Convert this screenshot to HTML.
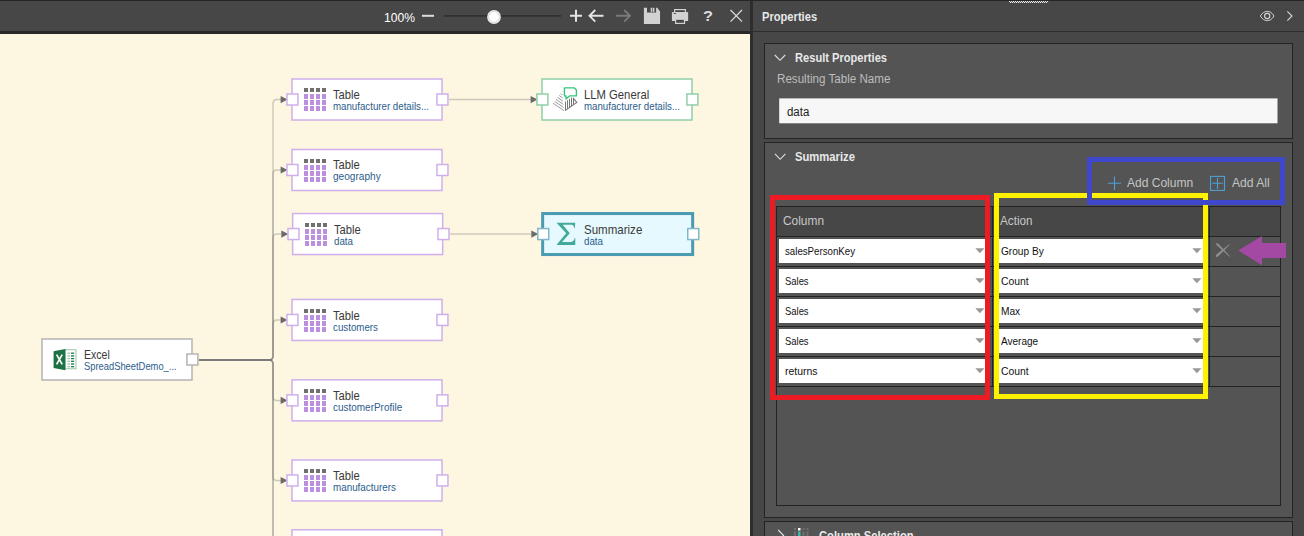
<!DOCTYPE html>
<html><head><meta charset="utf-8"><title>Properties</title>
<style>
*{box-sizing:border-box;margin:0;padding:0}
html,body{width:1304px;height:536px;overflow:hidden;background:#474747;font-family:"Liberation Sans",sans-serif}
.a{position:absolute}
.x{position:absolute;white-space:nowrap;transform-origin:0 0}
</style></head><body>
<div class="a" style="left:0;top:0;width:1304px;height:1px;background:#262626"></div>
<div class="a" style="left:0;top:31px;width:753px;height:3px;background:#282828"></div>
<div class="a" style="left:750px;top:1px;width:3px;height:535px;background:#2d2d2d"></div>
<div class="a" style="left:753px;top:31px;width:551px;height:1px;background:#2d2d2d"></div>
<div class="a" id="canvas" style="left:0;top:34px;width:750px;height:502px;background:#fdf6e0"></div>
<svg class="a" style="left:360px;top:0" width="400" height="34" viewBox="360 0 400 34">
<rect x="422" y="14.8" width="12" height="2" fill="#dcdcdc"/>
<rect x="444" y="15.1" width="117" height="1.6" fill="#2e2e2e"/>
<circle cx="494" cy="17" r="7.400" fill="#3c3c3c" fill-opacity="0.5"/><circle cx="494" cy="17" r="6.900" fill="#ececec"/><circle cx="494" cy="17" r="5.700" fill="#d6d6d6"/><circle cx="494" cy="17" r="4.900" fill="#fff"/>
<path d="M570 15.8h12M576 9.8v12" stroke="#e4e4e4" stroke-width="2" fill="none"/>
<path d="M589.5 15.8h14M595.3 10l-5.8 5.8 5.8 5.8" stroke="#e4e4e4" stroke-width="1.9" fill="none"/>
<path d="M616 15.8h14M624.2 10l5.8 5.8-5.8 5.8" stroke="#7a7a7a" stroke-width="1.9" fill="none"/>
<path d="M643.900 7.800H647V12.600H656.100V7.800H657.300L660.050 11.400V24H643.900Z" fill="#d2d2d2"/>
<path d="M650.700 7.800H654.400V11.800H650.700Z" fill="#d2d2d2"/><rect x="652.200" y="7.800" width="0.800" height="4" fill="#474747" fill-opacity="0.8"/>
<rect x="674.600" y="9.600" width="10.800" height="3" fill="#474747" stroke="#d2d2d2" stroke-width="1.200"/>
<rect x="671.900" y="12.100" width="16.250" height="8.900" fill="#d2d2d2"/>
<rect x="673.800" y="13" width="2" height="0.900" fill="#3a3a3a"/>
<rect x="675.600" y="19.200" width="8.900" height="4.200" fill="#474747" stroke="#d2d2d2" stroke-width="1.200"/>
<path d="M730.5 10l11.5 11.6M742 10l-11.5 11.6" stroke="#dcdcdc" stroke-width="1.2" fill="none"/>
</svg>
<div class="a" style="left:1009px;top:1px;width:40px;height:1px;background:repeating-linear-gradient(90deg,#f0f0f0 0 1px,#5a5a5a 1px 2px)"></div>
<div class="a" style="left:1010px;top:2px;width:37px;height:1px;background:repeating-linear-gradient(90deg,#f0f0f0 0 1px,#5a5a5a 1px 2px)"></div>
<svg class="a" style="left:1255px;top:5px" width="45" height="22" viewBox="1255 5 45 22">
<path d="M1260.4 16c2-3.4 4.2-4.6 6.8-4.6s4.8 1.2 6.8 4.6c-2 3.4-4.2 4.6-6.8 4.6s-4.800-1.200-6.800-4.600z" fill="none" stroke="#d4d4d4" stroke-width="1"/>
<circle cx="1267.2" cy="16" r="2.6" fill="none" stroke="#d8d8d8" stroke-width="1.1"/>
<path d="M1287.300 11.300l4.700 4.700-4.700 4.700" fill="none" stroke="#d8d8d8" stroke-width="1.1"/>
</svg>
<div class="a" style="left:764px;top:43px;width:529px;height:96px;background:#545454;border:1px solid #232323"></div>
<svg class="a" style="left:772px;top:50px" width="16" height="14"><path d="M2.800 5l5.200 5.300 5.200-5.300" fill="none" stroke="#e0e0e0" stroke-width="1.1"/></svg>
<svg class="a" style="left:778px;top:97px" width="502" height="28" viewBox="778 97 502 28"><rect x="779.200" y="98.400" width="498.300" height="24.900" fill="#f7f7f7"/></svg>
<div class="a" style="left:764px;top:142px;width:529px;height:375.500px;background:#545454;border:1px solid #232323"></div>
<svg class="a" style="left:772px;top:149px" width="16" height="14"><path d="M3 4.900l5.200 5.400 5.200-5.400" fill="none" stroke="#e0e0e0" stroke-width="1.1"/></svg>
<svg class="a" style="left:1100px;top:170px" width="135" height="28" viewBox="1100 170 135 28">
<path d="M1108 183.300h13M1114.500 176.600v13.400" stroke="#4d9fd6" stroke-width="1.100" fill="none"/>
<rect x="1210.500" y="176.400" width="14" height="14" fill="none" stroke="#4d9fd6" stroke-width="1.100"/>
<path d="M1212 183.300h11M1217.500 178v11" stroke="#4d9fd6" stroke-width="1.100" fill="none"/>
</svg>
<div class="a" style="left:776px;top:206px;width:505px;height:300px;border:1px solid #232323"></div>
<div class="a" style="left:777px;top:207px;width:503px;height:29px;background:#474747"></div>
<div class="a" style="left:777px;top:236px;width:503px;height:1px;background:#232323"></div>
<div class="a" style="left:992px;top:207px;width:1px;height:180px;background:#232323"></div>
<div class="a" style="left:1209px;top:207px;width:1px;height:180px;background:#232323"></div>
<div class="a" style="left:779px;top:239px;width:210px;height:24px;background:#fff"></div>
<div class="a" style="left:996px;top:239px;width:210px;height:24px;background:#fff"></div>
<div class="a" style="left:777px;top:266px;width:503px;height:1px;background:#232323"></div>
<svg class="a" style="left:975px;top:248px" width="11" height="6"><path d="M0.300 0.200h9.200l-4.600 5z" fill="#999"/></svg>
<svg class="a" style="left:1192px;top:248px" width="11" height="6"><path d="M0.300 0.200h9.200l-4.600 5z" fill="#999"/></svg>
<div class="a" style="left:779px;top:269px;width:210px;height:24px;background:#fff"></div>
<div class="a" style="left:996px;top:269px;width:210px;height:24px;background:#fff"></div>
<div class="a" style="left:777px;top:296px;width:503px;height:1px;background:#232323"></div>
<svg class="a" style="left:975px;top:278px" width="11" height="6"><path d="M0.300 0.200h9.200l-4.600 5z" fill="#999"/></svg>
<svg class="a" style="left:1192px;top:278px" width="11" height="6"><path d="M0.300 0.200h9.200l-4.600 5z" fill="#999"/></svg>
<div class="a" style="left:779px;top:299px;width:210px;height:24px;background:#fff"></div>
<div class="a" style="left:996px;top:299px;width:210px;height:24px;background:#fff"></div>
<div class="a" style="left:777px;top:326px;width:503px;height:1px;background:#232323"></div>
<svg class="a" style="left:975px;top:308px" width="11" height="6"><path d="M0.300 0.200h9.200l-4.600 5z" fill="#999"/></svg>
<svg class="a" style="left:1192px;top:308px" width="11" height="6"><path d="M0.300 0.200h9.200l-4.600 5z" fill="#999"/></svg>
<div class="a" style="left:779px;top:329px;width:210px;height:24px;background:#fff"></div>
<div class="a" style="left:996px;top:329px;width:210px;height:24px;background:#fff"></div>
<div class="a" style="left:777px;top:356px;width:503px;height:1px;background:#232323"></div>
<svg class="a" style="left:975px;top:338px" width="11" height="6"><path d="M0.300 0.200h9.200l-4.600 5z" fill="#999"/></svg>
<svg class="a" style="left:1192px;top:338px" width="11" height="6"><path d="M0.300 0.200h9.200l-4.600 5z" fill="#999"/></svg>
<div class="a" style="left:779px;top:359px;width:210px;height:24px;background:#fff"></div>
<div class="a" style="left:996px;top:359px;width:210px;height:24px;background:#fff"></div>
<div class="a" style="left:777px;top:386px;width:503px;height:1px;background:#232323"></div>
<svg class="a" style="left:975px;top:368px" width="11" height="6"><path d="M0.300 0.200h9.200l-4.600 5z" fill="#999"/></svg>
<svg class="a" style="left:1192px;top:368px" width="11" height="6"><path d="M0.300 0.200h9.200l-4.600 5z" fill="#999"/></svg>
<svg class="a" style="left:1214px;top:241px" width="18" height="18" viewBox="1214 241 18 18"><path d="M1216.200 243.600Q1216.900 242.500 1218.300 243.700L1230 256.200 1229.600 256.800 1217.200 245.800Q1215.700 244.500 1216.200 243.600Z" fill="#8e8e8e"/><path d="M1216.100 256.700Q1215.400 255.500 1216.700 254.200L1229.600 244.100 1229.900 244.600 1218.600 255.900Q1217 257.600 1216.100 256.700Z" fill="#8e8e8e"/></svg>
<div class="a" style="left:770px;top:195px;width:220px;height:205px;border:5px solid #ed1c24"></div>
<div class="a" style="left:994px;top:193px;width:214px;height:206px;border:5px solid #fff200"></div>
<div class="a" style="left:1087px;top:157px;width:198px;height:48px;border:5px solid #3f48cc"></div>
<svg class="a" style="left:1236px;top:233px" width="54" height="36" viewBox="1236 233 54 36"><path d="M1238.200 250.400L1262 236V243h24v15h-24v7.200z" fill="#a349a4"/></svg>
<div class="a" style="left:764px;top:521px;width:529px;height:30px;background:#545454;border:1px solid #232323"></div>
<svg class="a" style="left:774px;top:524px" width="40" height="12" viewBox="774 524 40 12"><path d="M778.200 530l5.400 5.600-3 3" fill="none" stroke="#e0e0e0" stroke-width="1.100"/><rect x="798" y="528" width="2.500" height="2.500" fill="#fff"/><rect x="798" y="531.500" width="2.500" height="5" fill="#3fb8a8"/><g fill="#6e6e6e"><rect x="794" y="528" width="2" height="2"/><rect x="794" y="531.500" width="2" height="5"/><rect x="802.500" y="528" width="2" height="2"/><rect x="802.500" y="531.500" width="2" height="5"/><rect x="806.500" y="528" width="2" height="2"/><rect x="806.500" y="531.500" width="2" height="5"/></g></svg>
<svg class="a" style="left:0;top:34px" width="750" height="502" viewBox="0 34 750 502"><g fill="none" stroke="#6e6e6e" stroke-opacity="0.32" stroke-width="1.5"><path d="M199 360H269q4 0 4-4V103.6q0-4 4-4h4"/><path d="M199 360H269q4 0 4-4V174.0q0-4 4-4h4"/><path d="M199 360H269q4 0 4-4V238.1q0-4 4-4h4"/><path d="M199 360H269q4 0 4-4V324.0q0-4 4-4h4"/><path d="M199 360H269q4 0 4 4V396.4q0 4 4 4h4"/><path d="M199 360H269q4 0 4 4V476.5q0 4 4 4h4"/><path d="M199 360H269q4 0 4 4V546.3q0 4 4 4h4"/><path d="M199 360H269q4 0 4 4V616.0q0 4 4 4h4"/><path d="M449 99.600H531"/><path d="M450 234.100H531"/></g><g fill="#6b6b6b"><path d="M280.6 96.0l7 3.600-7 3.600z"/><path d="M280.6 166.4l7 3.600-7 3.600z"/><path d="M281.3 230.5l7 3.600-7 3.600z"/><path d="M280.6 316.4l7 3.600-7 3.600z"/><path d="M280.6 396.8l7 3.600-7 3.600z"/><path d="M280.6 476.9l7 3.600-7 3.600z"/><path d="M530.6 96.0l7 3.600-7 3.600z"/><path d="M531.3 230.5l7 3.600-7 3.600z"/></g><rect x="292" y="79" width="150" height="41" fill="#fff" stroke="#cfb0ec" stroke-width="1.5"/><rect x="286.95" y="94.00" width="11" height="11" fill="#fff" stroke="#cfb0ec" stroke-width="1.5"/><rect x="436.95" y="94.00" width="11" height="11" fill="#fff" stroke="#cfb0ec" stroke-width="1.5"/><rect x="304.00" y="88.00" width="4" height="4" fill="#707070"/><rect x="304.00" y="94.00" width="4" height="5" fill="#bb90df"/><rect x="304.00" y="100.00" width="4" height="5" fill="#bb90df"/><rect x="304.00" y="106.00" width="4" height="5" fill="#bb90df"/><rect x="310.00" y="88.00" width="4" height="4" fill="#707070"/><rect x="310.00" y="94.00" width="4" height="5" fill="#bb90df"/><rect x="310.00" y="100.00" width="4" height="5" fill="#bb90df"/><rect x="310.00" y="106.00" width="4" height="5" fill="#bb90df"/><rect x="316.00" y="88.00" width="4" height="4" fill="#707070"/><rect x="316.00" y="94.00" width="4" height="5" fill="#bb90df"/><rect x="316.00" y="100.00" width="4" height="5" fill="#bb90df"/><rect x="316.00" y="106.00" width="4" height="5" fill="#bb90df"/><rect x="322.00" y="88.00" width="4" height="4" fill="#707070"/><rect x="322.00" y="94.00" width="4" height="5" fill="#bb90df"/><rect x="322.00" y="100.00" width="4" height="5" fill="#bb90df"/><rect x="322.00" y="106.00" width="4" height="5" fill="#bb90df"/><rect x="292" y="149.5" width="150" height="41" fill="#fff" stroke="#cfb0ec" stroke-width="1.5"/><rect x="286.95" y="164.50" width="11" height="11" fill="#fff" stroke="#cfb0ec" stroke-width="1.5"/><rect x="436.95" y="164.50" width="11" height="11" fill="#fff" stroke="#cfb0ec" stroke-width="1.5"/><rect x="304.00" y="159.00" width="4" height="4" fill="#707070"/><rect x="304.00" y="165.00" width="4" height="5" fill="#bb90df"/><rect x="304.00" y="171.00" width="4" height="5" fill="#bb90df"/><rect x="304.00" y="177.00" width="4" height="5" fill="#bb90df"/><rect x="310.00" y="159.00" width="4" height="4" fill="#707070"/><rect x="310.00" y="165.00" width="4" height="5" fill="#bb90df"/><rect x="310.00" y="171.00" width="4" height="5" fill="#bb90df"/><rect x="310.00" y="177.00" width="4" height="5" fill="#bb90df"/><rect x="316.00" y="159.00" width="4" height="4" fill="#707070"/><rect x="316.00" y="165.00" width="4" height="5" fill="#bb90df"/><rect x="316.00" y="171.00" width="4" height="5" fill="#bb90df"/><rect x="316.00" y="177.00" width="4" height="5" fill="#bb90df"/><rect x="322.00" y="159.00" width="4" height="4" fill="#707070"/><rect x="322.00" y="165.00" width="4" height="5" fill="#bb90df"/><rect x="322.00" y="171.00" width="4" height="5" fill="#bb90df"/><rect x="322.00" y="177.00" width="4" height="5" fill="#bb90df"/><rect x="292.65" y="213.55" width="150" height="41" fill="#fff" stroke="#cfb0ec" stroke-width="1.5"/><rect x="288.00" y="228.55" width="11" height="11" fill="#fff" stroke="#cfb0ec" stroke-width="1.5"/><rect x="438.00" y="228.55" width="11" height="11" fill="#fff" stroke="#cfb0ec" stroke-width="1.5"/><rect x="305.00" y="223.00" width="4" height="4" fill="#707070"/><rect x="305.00" y="229.00" width="4" height="5" fill="#bb90df"/><rect x="305.00" y="235.00" width="4" height="5" fill="#bb90df"/><rect x="305.00" y="241.00" width="4" height="5" fill="#bb90df"/><rect x="311.00" y="223.00" width="4" height="4" fill="#707070"/><rect x="311.00" y="229.00" width="4" height="5" fill="#bb90df"/><rect x="311.00" y="235.00" width="4" height="5" fill="#bb90df"/><rect x="311.00" y="241.00" width="4" height="5" fill="#bb90df"/><rect x="317.00" y="223.00" width="4" height="4" fill="#707070"/><rect x="317.00" y="229.00" width="4" height="5" fill="#bb90df"/><rect x="317.00" y="235.00" width="4" height="5" fill="#bb90df"/><rect x="317.00" y="241.00" width="4" height="5" fill="#bb90df"/><rect x="323.00" y="223.00" width="4" height="4" fill="#707070"/><rect x="323.00" y="229.00" width="4" height="5" fill="#bb90df"/><rect x="323.00" y="235.00" width="4" height="5" fill="#bb90df"/><rect x="323.00" y="241.00" width="4" height="5" fill="#bb90df"/><rect x="292" y="299.45" width="150" height="41" fill="#fff" stroke="#cfb0ec" stroke-width="1.5"/><rect x="286.95" y="314.45" width="11" height="11" fill="#fff" stroke="#cfb0ec" stroke-width="1.5"/><rect x="436.95" y="314.45" width="11" height="11" fill="#fff" stroke="#cfb0ec" stroke-width="1.5"/><rect x="304.00" y="309.00" width="4" height="4" fill="#707070"/><rect x="304.00" y="315.00" width="4" height="5" fill="#bb90df"/><rect x="304.00" y="321.00" width="4" height="5" fill="#bb90df"/><rect x="304.00" y="327.00" width="4" height="5" fill="#bb90df"/><rect x="310.00" y="309.00" width="4" height="4" fill="#707070"/><rect x="310.00" y="315.00" width="4" height="5" fill="#bb90df"/><rect x="310.00" y="321.00" width="4" height="5" fill="#bb90df"/><rect x="310.00" y="327.00" width="4" height="5" fill="#bb90df"/><rect x="316.00" y="309.00" width="4" height="4" fill="#707070"/><rect x="316.00" y="315.00" width="4" height="5" fill="#bb90df"/><rect x="316.00" y="321.00" width="4" height="5" fill="#bb90df"/><rect x="316.00" y="327.00" width="4" height="5" fill="#bb90df"/><rect x="322.00" y="309.00" width="4" height="4" fill="#707070"/><rect x="322.00" y="315.00" width="4" height="5" fill="#bb90df"/><rect x="322.00" y="321.00" width="4" height="5" fill="#bb90df"/><rect x="322.00" y="327.00" width="4" height="5" fill="#bb90df"/><rect x="292" y="379.85" width="150" height="41" fill="#fff" stroke="#cfb0ec" stroke-width="1.5"/><rect x="286.95" y="394.85" width="11" height="11" fill="#fff" stroke="#cfb0ec" stroke-width="1.5"/><rect x="436.95" y="394.85" width="11" height="11" fill="#fff" stroke="#cfb0ec" stroke-width="1.5"/><rect x="304.00" y="389.00" width="4" height="4" fill="#707070"/><rect x="304.00" y="395.00" width="4" height="5" fill="#bb90df"/><rect x="304.00" y="401.00" width="4" height="5" fill="#bb90df"/><rect x="304.00" y="407.00" width="4" height="5" fill="#bb90df"/><rect x="310.00" y="389.00" width="4" height="4" fill="#707070"/><rect x="310.00" y="395.00" width="4" height="5" fill="#bb90df"/><rect x="310.00" y="401.00" width="4" height="5" fill="#bb90df"/><rect x="310.00" y="407.00" width="4" height="5" fill="#bb90df"/><rect x="316.00" y="389.00" width="4" height="4" fill="#707070"/><rect x="316.00" y="395.00" width="4" height="5" fill="#bb90df"/><rect x="316.00" y="401.00" width="4" height="5" fill="#bb90df"/><rect x="316.00" y="407.00" width="4" height="5" fill="#bb90df"/><rect x="322.00" y="389.00" width="4" height="4" fill="#707070"/><rect x="322.00" y="395.00" width="4" height="5" fill="#bb90df"/><rect x="322.00" y="401.00" width="4" height="5" fill="#bb90df"/><rect x="322.00" y="407.00" width="4" height="5" fill="#bb90df"/><rect x="292" y="459.95" width="150" height="41" fill="#fff" stroke="#cfb0ec" stroke-width="1.5"/><rect x="286.95" y="474.95" width="11" height="11" fill="#fff" stroke="#cfb0ec" stroke-width="1.5"/><rect x="436.95" y="474.95" width="11" height="11" fill="#fff" stroke="#cfb0ec" stroke-width="1.5"/><rect x="304.00" y="469.00" width="4" height="4" fill="#707070"/><rect x="304.00" y="475.00" width="4" height="5" fill="#bb90df"/><rect x="304.00" y="481.00" width="4" height="5" fill="#bb90df"/><rect x="304.00" y="487.00" width="4" height="5" fill="#bb90df"/><rect x="310.00" y="469.00" width="4" height="4" fill="#707070"/><rect x="310.00" y="475.00" width="4" height="5" fill="#bb90df"/><rect x="310.00" y="481.00" width="4" height="5" fill="#bb90df"/><rect x="310.00" y="487.00" width="4" height="5" fill="#bb90df"/><rect x="316.00" y="469.00" width="4" height="4" fill="#707070"/><rect x="316.00" y="475.00" width="4" height="5" fill="#bb90df"/><rect x="316.00" y="481.00" width="4" height="5" fill="#bb90df"/><rect x="316.00" y="487.00" width="4" height="5" fill="#bb90df"/><rect x="322.00" y="469.00" width="4" height="4" fill="#707070"/><rect x="322.00" y="475.00" width="4" height="5" fill="#bb90df"/><rect x="322.00" y="481.00" width="4" height="5" fill="#bb90df"/><rect x="322.00" y="487.00" width="4" height="5" fill="#bb90df"/><rect x="292" y="529.75" width="150" height="41" fill="#fff" stroke="#cfb0ec" stroke-width="1.5"/><rect x="286.95" y="544.75" width="11" height="11" fill="#fff" stroke="#cfb0ec" stroke-width="1.5"/><rect x="436.95" y="544.75" width="11" height="11" fill="#fff" stroke="#cfb0ec" stroke-width="1.5"/><rect x="304.00" y="539.00" width="4" height="4" fill="#707070"/><rect x="304.00" y="545.00" width="4" height="5" fill="#bb90df"/><rect x="304.00" y="551.00" width="4" height="5" fill="#bb90df"/><rect x="304.00" y="557.00" width="4" height="5" fill="#bb90df"/><rect x="310.00" y="539.00" width="4" height="4" fill="#707070"/><rect x="310.00" y="545.00" width="4" height="5" fill="#bb90df"/><rect x="310.00" y="551.00" width="4" height="5" fill="#bb90df"/><rect x="310.00" y="557.00" width="4" height="5" fill="#bb90df"/><rect x="316.00" y="539.00" width="4" height="4" fill="#707070"/><rect x="316.00" y="545.00" width="4" height="5" fill="#bb90df"/><rect x="316.00" y="551.00" width="4" height="5" fill="#bb90df"/><rect x="316.00" y="557.00" width="4" height="5" fill="#bb90df"/><rect x="322.00" y="539.00" width="4" height="4" fill="#707070"/><rect x="322.00" y="545.00" width="4" height="5" fill="#bb90df"/><rect x="322.00" y="551.00" width="4" height="5" fill="#bb90df"/><rect x="322.00" y="557.00" width="4" height="5" fill="#bb90df"/><rect x="42" y="339" width="150" height="41" fill="#fff" stroke="#b4b4b4" stroke-width="1.5"/><rect x="186.90" y="354.00" width="11" height="11" fill="#fff" stroke="#b4b4b4" stroke-width="1.5"/><g>
<rect x="65" y="349.800" width="11" height="19" fill="#fff" stroke="#8fbc9f" stroke-width="0.9"/>
<g fill="#a5ccb3"><rect x="67.300" y="352.500" width="2.800" height="1.400"/><rect x="67.300" y="355.200" width="2.800" height="1.400"/><rect x="67.300" y="357.900" width="2.800" height="1.400"/><rect x="67.300" y="360.600" width="2.800" height="1.400"/><rect x="67.300" y="363.300" width="2.800" height="1.400"/><rect x="67.300" y="366" width="2.800" height="1.400"/></g>
<g fill="#2e7d54"><rect x="71" y="352.500" width="3.200" height="1.400"/><rect x="71" y="355.200" width="3.200" height="1.400"/><rect x="71" y="357.900" width="3.200" height="1.400"/><rect x="71" y="360.600" width="3.200" height="1.400"/><rect x="71" y="363.300" width="3.200" height="1.400"/><rect x="71" y="366" width="3.200" height="1.400"/></g>
<path d="M53.600 351.200L65.400 349V370.200L53.600 368z" fill="#1e7145"/>
<path d="M56.600 354.600l5.600 9.800M62.200 354.600l-5.600 9.800" stroke="#fff" stroke-width="1.700" fill="none"/>
</g><rect x="542" y="79" width="150" height="41" fill="#fff" stroke="#8fcfa8" stroke-width="1.5"/><rect x="536.90" y="94.00" width="11" height="11" fill="#fff" stroke="#8fcfa8" stroke-width="1.5"/><rect x="686.90" y="94.00" width="11" height="11" fill="#fff" stroke="#8fcfa8" stroke-width="1.5"/><g stroke="#8c8c8c" stroke-width="0.9" fill="none"><path d="M553.1 103.3L564.0 110.6"/><path d="M554.6 101.3L563.6 107.5"/><path d="M556.1 99.4L563.3 104.4"/><path d="M557.6 97.4L562.9 101.2"/><path d="M559.2 95.5L562.6 98.1"/><path d="M560.7 93.5L562.2 95.0"/><path d="M562.2 91.5L561.9 91.9"/></g><g stroke="#767676" stroke-width="1" fill="none"><path d="M565.5 101.5V110.3"/><path d="M567.5 100.2V109"/><path d="M569.5 98.8V107.6"/><path d="M571.5 97.6V106.2"/><path d="M573.5 98.2V104.9"/><path d="M573 97.800L576.800 102.400 565 110.600" stroke-width="1.100"/></g><path d="M564.400 87.800H574.200L576.400 90V95.900H569.600L566 99.100V95.900H564.400Z" fill="#fff" stroke="#33c47f" stroke-width="1.350" stroke-linejoin="round"/><rect x="542.65" y="213.55" width="150" height="41" fill="#e6f9ff" stroke="#4a9bb2" stroke-width="3"/><rect x="537.75" y="228.55" width="11" height="11" fill="#fff" stroke="#7fb9c9" stroke-width="1.5"/><rect x="687.75" y="228.55" width="11" height="11" fill="#fff" stroke="#7fb9c9" stroke-width="1.5"/><g transform="translate(550,216) scale(0.06338)"><path d="M110 106H398L392 192H383Q378 142 340 140H200L312 272 190 410H330Q380 406 387 353H399V456H110V447L256 274 110 116Z" fill="#41aa98"/></g></svg>
<div class="x" style="left:383.5px;top:11px;font-size:12.5px;line-height:15px;color:#ffffff;transform:scaleX(0.9692)">100%</div>
<div class="x" style="left:703.4px;top:6px;font-size:15.5px;line-height:19px;color:#dedede;font-weight:700;transform:scaleX(1.0561)">?</div>
<div class="x" style="left:761.9px;top:10px;font-size:12.2px;line-height:15px;color:#e8e8e8;font-weight:700;transform:scaleX(0.9138)">Properties</div>
<div class="x" style="left:794.8px;top:51px;font-size:12.2px;line-height:15px;color:#e8e8e8;font-weight:700;transform:scaleX(0.9116)">Result Properties</div>
<div class="x" style="left:777.0px;top:72px;font-size:12px;line-height:14px;color:#bdbdbd;transform:scaleX(0.9677)">Resulting Table Name</div>
<div class="x" style="left:786.8px;top:105px;font-size:12.3px;line-height:15px;color:#1c1c1c;transform:scaleX(0.9316)">data</div>
<div class="x" style="left:794.7px;top:150px;font-size:12.2px;line-height:15px;color:#e8e8e8;font-weight:700;transform:scaleX(0.9226)">Summarize</div>
<div class="x" style="left:1127.0px;top:175px;font-size:13px;line-height:16px;color:#c4c4c4;transform:scaleX(0.9253)">Add Column</div>
<div class="x" style="left:1231.8px;top:175px;font-size:13px;line-height:16px;color:#c4c4c4;transform:scaleX(0.9312)">Add All</div>
<div class="x" style="left:782.5px;top:213px;font-size:13px;line-height:16px;color:#c8c8c8;transform:scaleX(0.9152)">Column</div>
<div class="x" style="left:999.6px;top:213px;font-size:13px;line-height:16px;color:#c8c8c8;transform:scaleX(0.8993)">Action</div>
<div class="x" style="left:784.5px;top:245px;font-size:11.2px;line-height:13px;color:#111;transform:scaleX(0.8659)">salesPersonKey</div>
<div class="x" style="left:1000.9px;top:245px;font-size:11.2px;line-height:13px;color:#111;transform:scaleX(0.9034)">Group By</div>
<div class="x" style="left:784.5px;top:275px;font-size:11.2px;line-height:13px;color:#111;transform:scaleX(0.8429)">Sales</div>
<div class="x" style="left:1000.9px;top:275px;font-size:11.2px;line-height:13px;color:#111;transform:scaleX(0.9277)">Count</div>
<div class="x" style="left:784.5px;top:305px;font-size:11.2px;line-height:13px;color:#111;transform:scaleX(0.8429)">Sales</div>
<div class="x" style="left:1000.9px;top:305px;font-size:11.2px;line-height:13px;color:#111;transform:scaleX(0.9082)">Max</div>
<div class="x" style="left:784.5px;top:335px;font-size:11.2px;line-height:13px;color:#111;transform:scaleX(0.8429)">Sales</div>
<div class="x" style="left:1000.9px;top:335px;font-size:11.2px;line-height:13px;color:#111;transform:scaleX(0.8971)">Average</div>
<div class="x" style="left:784.5px;top:365px;font-size:11.2px;line-height:13px;color:#111;transform:scaleX(0.9303)">returns</div>
<div class="x" style="left:1000.9px;top:365px;font-size:11.2px;line-height:13px;color:#111;transform:scaleX(0.9277)">Count</div>
<div class="x" style="left:819.1px;top:528px;font-size:13px;line-height:16px;color:#ececec;font-weight:700;transform:scaleX(0.8616)">Column Selection</div>
<div class="x" style="left:333.2px;top:87px;font-size:13px;line-height:16px;color:#3a3a3a;transform:scaleX(0.8623)">Table</div>
<div class="x" style="left:333.2px;top:100px;font-size:11px;line-height:13px;color:#2c5d8c;transform:scaleX(0.8820)">manufacturer details...</div>
<div class="x" style="left:332.8px;top:157px;font-size:13px;line-height:16px;color:#3a3a3a;transform:scaleX(0.8623)">Table</div>
<div class="x" style="left:332.8px;top:170px;font-size:11px;line-height:13px;color:#2c5d8c;transform:scaleX(0.9173)">geography</div>
<div class="x" style="left:333.8px;top:222px;font-size:13px;line-height:16px;color:#3a3a3a;transform:scaleX(0.8623)">Table</div>
<div class="x" style="left:333.8px;top:235px;font-size:11px;line-height:13px;color:#2c5d8c;transform:scaleX(0.8869)">data</div>
<div class="x" style="left:332.8px;top:308px;font-size:13px;line-height:16px;color:#3a3a3a;transform:scaleX(0.8623)">Table</div>
<div class="x" style="left:332.8px;top:321px;font-size:11px;line-height:13px;color:#2c5d8c;transform:scaleX(0.8867)">customers</div>
<div class="x" style="left:332.8px;top:388px;font-size:13px;line-height:16px;color:#3a3a3a;transform:scaleX(0.8623)">Table</div>
<div class="x" style="left:332.8px;top:401px;font-size:11px;line-height:13px;color:#2c5d8c;transform:scaleX(0.9055)">customerProfile</div>
<div class="x" style="left:332.8px;top:468px;font-size:13px;line-height:16px;color:#3a3a3a;transform:scaleX(0.8623)">Table</div>
<div class="x" style="left:332.8px;top:481px;font-size:11px;line-height:13px;color:#2c5d8c;transform:scaleX(0.8946)">manufacturers</div>
<div class="x" style="left:332.8px;top:538px;font-size:13px;line-height:16px;color:#3a3a3a;transform:scaleX(0.8623)">Table</div>
<div class="x" style="left:83.5px;top:347px;font-size:13px;line-height:16px;color:#3a3a3a;transform:scaleX(0.8114)">Excel</div>
<div class="x" style="left:83.5px;top:360px;font-size:11px;line-height:13px;color:#2c5d8c;transform:scaleX(0.8506)">SpreadSheetDemo_...</div>
<div class="x" style="left:583.6px;top:87px;font-size:13px;line-height:16px;color:#3a3a3a;transform:scaleX(0.8675)">LLM General</div>
<div class="x" style="left:583.6px;top:100px;font-size:11px;line-height:13px;color:#2c5d8c;transform:scaleX(0.8820)">manufacturer details...</div>
<div class="x" style="left:584.1px;top:222px;font-size:13px;line-height:16px;color:#3a3a3a;transform:scaleX(0.8867)">Summarize</div>
<div class="x" style="left:584.1px;top:235px;font-size:11px;line-height:13px;color:#2c5d8c;transform:scaleX(0.8869)">data</div>
</body></html>
